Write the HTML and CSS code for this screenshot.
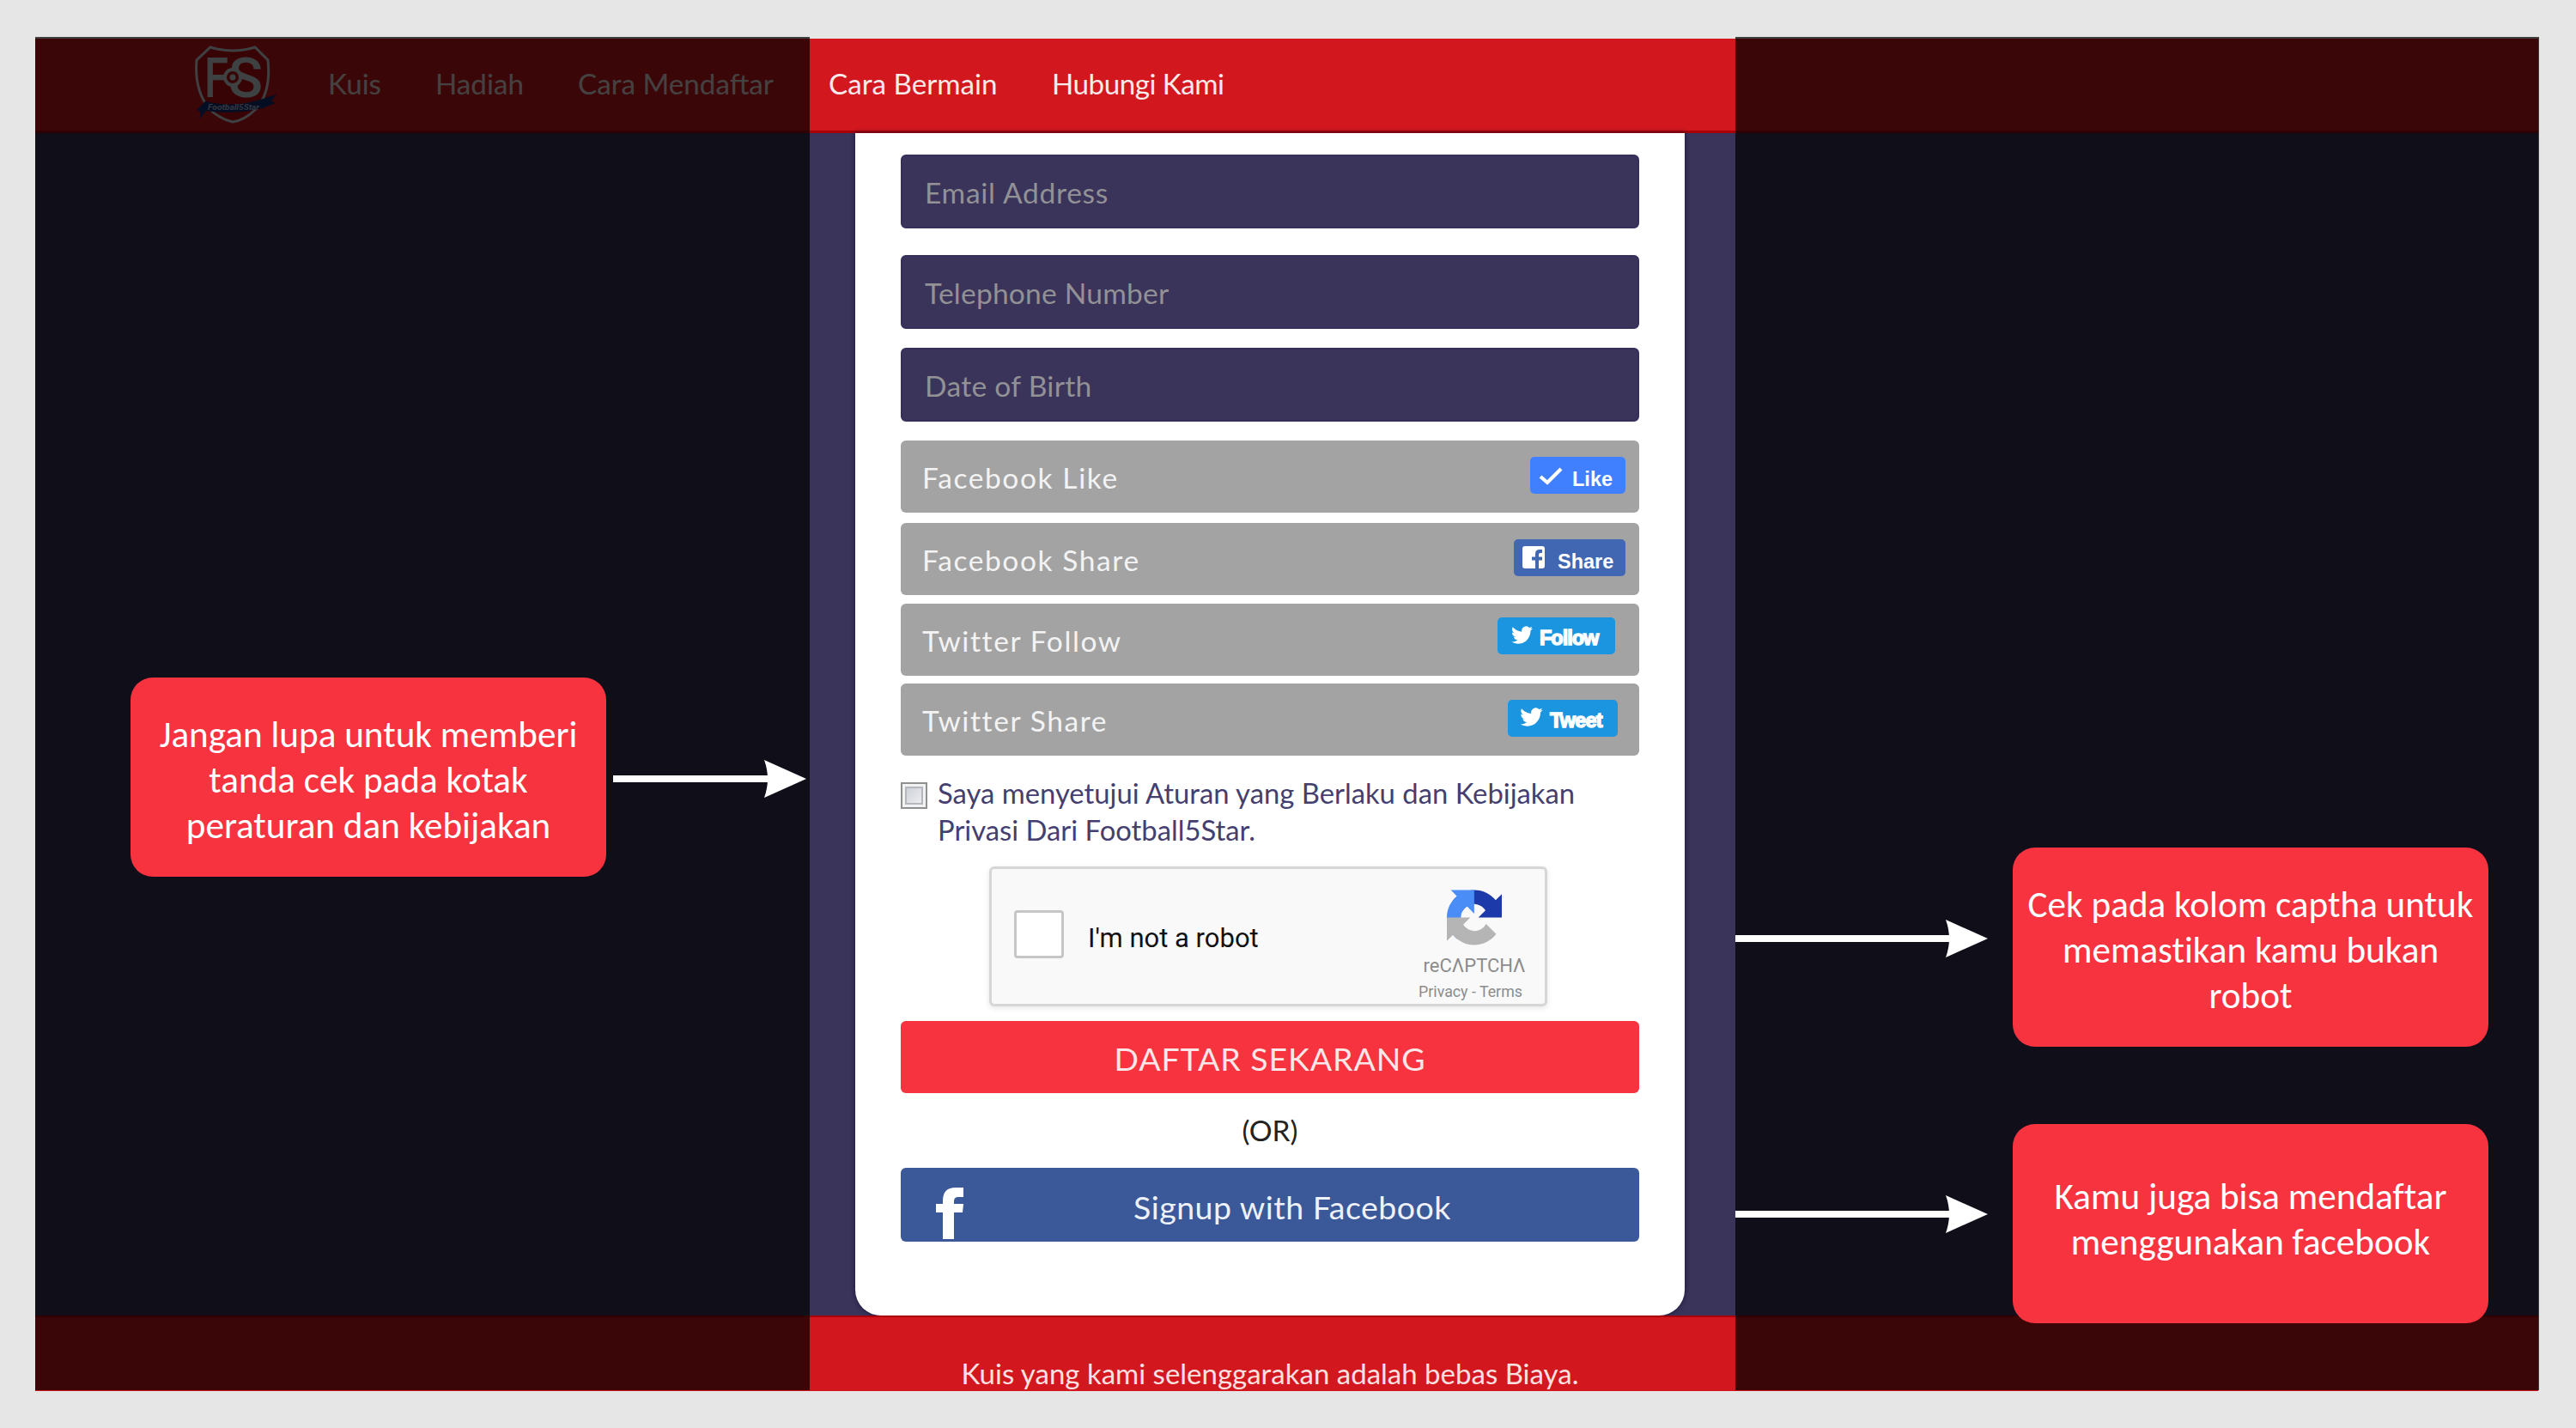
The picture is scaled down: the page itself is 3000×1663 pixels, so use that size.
FILE: index.html
```html
<!DOCTYPE html>
<html lang="id">
<head>
<meta charset="utf-8">
<title>Football5Star - Cara Mendaftar</title>
<link rel="stylesheet" href="styles.css">
</head>
<body>
<svg class="defs" width="0" height="0" aria-hidden="true">
  <symbol id="bird" viewBox="0 2 24 20"><path d="M23.95 4.57a10 10 0 0 1-2.82.77 4.96 4.96 0 0 0 2.16-2.72c-.95.56-2 .96-3.13 1.19a4.92 4.92 0 0 0-8.39 4.48C7.69 8.1 4.07 6.13 1.64 3.16a4.92 4.92 0 0 0 1.52 6.57 4.9 4.9 0 0 1-2.23-.61v.06a4.92 4.92 0 0 0 3.95 4.83 5 5 0 0 1-2.21.08 4.94 4.94 0 0 0 4.6 3.42A9.87 9.87 0 0 1 0 19.54a13.99 13.99 0 0 0 7.55 2.21c9.05 0 14-7.5 14-13.98 0-.21 0-.42-.02-.63a9.94 9.94 0 0 0 2.46-2.55z"/></symbol>
  <symbol id="arrowhead" viewBox="0 0 49 44"><path d="M0 0L49 22L0 44Q8 22 0 0Z"/></symbol>
</svg>

<div class="page">
  <header class="topbar">
    <svg class="logo" viewBox="0 0 96 96">
      <path class="crest" d="M20 5Q46 13 72 5L87 20Q91 57 73 77Q60 90 46 92Q30 88 19 77Q1 55 4 20Z"/>
      <text class="mono" x="13" y="63" textLength="28" lengthAdjust="spacingAndGlyphs">F</text>
      <text class="mono" x="41" y="63" textLength="40" lengthAdjust="spacingAndGlyphs">S</text>
      <circle class="ball" cx="46" cy="40" r="9"/>
      <circle class="ball-dot" cx="46" cy="40" r="3.500"/>
      <path class="ribbon" d="M4 78L14 68Q46 76 78 66L97 60L91 68L96 70L81 76Q46 84 15 79L8 88L8 80Z"/>
      <text class="banner" x="17" y="78" textLength="60" lengthAdjust="spacingAndGlyphs">Football5Star</text>
    </svg>
    <nav class="nav">
      <a>Kuis</a><a>Hadiah</a><a>Cara Mendaftar</a><a>Cara Bermain</a><a class="nav-contact">Hubungi Kami</a>
    </nav>
  </header>

  <main class="content">
    <form class="card">
      <div class="field email">Email Address</div>
      <div class="field phone">Telephone Number</div>
      <div class="field birth">Date of Birth</div>

      <div class="task task-like"><span>Facebook Like</span>
        <b class="btn like"><svg viewBox="0 0 28 21"><path d="M2 11l8 7L26 2" fill="none" stroke="#fff" stroke-width="4.2"/></svg><i>Like</i></b></div>
      <div class="task task-share"><span>Facebook Share</span>
        <b class="btn share"><svg viewBox="0 0 26 26"><path fill-rule="evenodd" d="M3 0H23Q26 0 26 3V23Q26 26 23 26H19V16.500H23V12.500H19V10Q19 8 21 8H23V4H20Q15 4 15 9V12.500H11V16.500H15V26H3Q0 26 0 23V3Q0 0 3 0Z"/></svg><i>Share</i></b></div>
      <div class="task task-follow"><span>Twitter Follow</span>
        <b class="btn follow"><svg><use href="#bird"/></svg><i>Follow</i></b></div>
      <div class="task task-tweet"><span>Twitter Share</span>
        <b class="btn tweet"><svg><use href="#bird"/></svg><i>Tweet</i></b></div>

      <div class="terms"><span class="tick"></span>
        <p>Saya menyetujui Aturan yang Berlaku dan Kebijakan<br><span>Privasi Dari Football5Star.</span></p></div>

      <div class="captcha">
        <span class="captcha-box"></span>
        <span class="captcha-label">I'm not a robot</span>
        <div class="captcha-brand">
          <svg viewBox="0 0 64 64">
            <path fill="#1c3aa9" d="M64 31.955l-.016-1.37V4.687l-7.16 7.16C50.964 4.674 42.033.093 32.03.093c-10.403 0-19.645 4.958-25.486 12.637l11.736 11.86a15.55 15.55 0 0 1 4.754-5.334c2.05-1.6 4.952-2.906 8.968-2.906.485 0 .86.057 1.135.163 4.976.393 9.288 3.14 11.828 7.124l-8.307 8.307L64 31.953"/>
            <path fill="#4a8df6" d="M31.862.094l-1.37.016H4.594l7.16 7.16C4.58 13.147 0 22.08 0 32.046c0 10.403 4.958 19.645 12.637 25.486L24.497 45.796a15.55 15.55 0 0 1-5.334-4.754c-1.6-2.05-2.906-4.952-2.906-8.968 0-.485.057-.86.163-1.135.393-4.976 3.14-9.288 7.124-11.828l8.307 8.307L31.86.095"/>
            <path fill="#b5b5b5" d="M.001 32.045l.016 1.37v25.898l7.16-7.16c5.868 7.174 14.8 11.754 24.766 11.754 10.403 0 19.645-4.958 25.486-12.637L45.693 39.41a15.55 15.55 0 0 1-4.754 5.334c-2.05 1.6-4.952 2.906-8.968 2.906-.485 0-.86-.057-1.135-.163-4.976-.393-9.288-3.14-11.828-7.124l8.307-8.307-27.314-.012"/>
          </svg>
          <span class="brand-name">reCΛPTCHΛ</span>
          <span class="brand-links">Privacy - Terms</span>
        </div>
      </div>

      <div class="submit">DAFTAR SEKARANG</div>
      <div class="or">(OR)</div>
      <div class="facebook">
        <svg viewBox="0 0 32 60"><path d="M8 60V29H0V19H8V15Q8 0 23 0H32V11H26Q21 11 21 16V19H32L31 29H21V60Z"/></svg>
        <span>Signup with Facebook</span>
      </div>
    </form>
  </main>

  <footer class="footer">Kuis yang kami selenggarakan adalah bebas Biaya.</footer>
</div>

<div class="shade shade-left"></div>
<div class="shade shade-right"></div>

<div class="note note-terms">Jangan lupa untuk memberi<br>tanda cek pada kotak<br>peraturan dan kebijakan</div>
<div class="note note-captcha">Cek pada kolom captha untuk<br>memastikan kamu bukan<br>robot</div>
<div class="note note-facebook">Kamu juga bisa mendaftar<br>menggunakan facebook</div>
<div class="arrow arrow-terms"><span></span><svg><use href="#arrowhead"/></svg></div>
<div class="arrow arrow-captcha"><span></span><svg><use href="#arrowhead"/></svg></div>
<div class="arrow arrow-facebook"><span></span><svg><use href="#arrowhead"/></svg></div>
</body>
</html>
```
FILE: styles.css
```css
* { box-sizing: border-box; }
body {
  margin: 0;
  width: 3000px;
  height: 1663px;
  padding: 45px 0 0 41px;
  overflow: hidden;
  position: relative;
  background: #e6e6e6;
  font-family: Lato, sans-serif;
  white-space: nowrap;
}
.defs { position: absolute; }
.page {
  width: 2915px;
  height: 1575px;
  display: flex;
  flex-direction: column;
  overflow: hidden;
  background: #3a345a;
}

/* top bar */
.topbar {
  height: 110px;
  display: flex;
  flex: none;
  background: #d2171e;
  border-bottom: 3px solid #a90008;
}
.logo { width: 96px; height: 96px; margin: 5px 0 0 184px; overflow: visible; }
.crest { fill: #c40d14; stroke: #dfe5ea; stroke-width: 3; }
.mono { font: 500 64px Roboto, sans-serif; fill: #dfe8ea; }
.ball { fill: #c40d14; stroke: #dfe8ea; stroke-width: 4; }
.ball-dot { fill: #dfe8ea; }
.ribbon { fill: #10307c; }
.banner { font: italic 700 9px Roboto, sans-serif; fill: #b9c4e0; }
.nav {
  display: grid;
  grid-template-columns: 125px 166px 292px 260px auto;
  margin-left: 61px;
  font-size: 33.2px;
  line-height: 105px;
  color: #f8e9ea;
}
.nav-contact { letter-spacing: -.5px; }

/* form card */
.content { height: 1377px; flex: none; display: flex; }
.card {
  width: 966px;
  margin-left: 955px;
  padding: 25px 53px 0;
  background: #fff;
  border-radius: 0 0 30px 30px;
  box-shadow: 0 0 5px 1px rgba(20, 14, 50, .6);
}
.field, .task, .submit, .facebook { border-radius: 6px; }
.field {
  height: 86px;
  padding-left: 26px;
  border: 2px solid #35305b;
  background: #3a345a;
  color: #929195;
  font-size: 33.6px;
  line-height: 85px;
}
.email { margin-bottom: 31px; letter-spacing: .7px; }
.phone { margin-bottom: 22px; letter-spacing: .2px; }
.birth { margin-bottom: 22px; letter-spacing: .3px; }

.task {
  height: 84px;
  display: flex;
  justify-content: space-between;
  padding-left: 25px;
  background: #a3a3a3;
  color: #f3f3f3;
  font-size: 33.5px;
  line-height: 86px;
  letter-spacing: 1.6px;
}
.task-like { margin-bottom: 12px; }
.task-share { margin-bottom: 10px; }
.task-follow { margin-bottom: 9px; }
.btn {
  height: 43px;
  display: flex;
  border-radius: 5px;
  color: #fff;
  font: 700 23.500px/27px "Liberation Sans", Arial, sans-serif;
  letter-spacing: 0;
}
.btn i { font-style: normal; }
.btn svg { fill: #fff; flex: none; }
.like { width: 111px; margin: 19px 16px 0 0; background: #4080ff; }
.like svg { width: 28px; height: 21px; margin: 12px 11px 0 10px; }
.like i { margin-top: 13px; }
.share { width: 130px; margin: 19px 16px 0 0; background: #4267b2; }
.share svg { width: 26px; height: 26px; margin: 8px 15px 0 10px; }
.share i { margin-top: 13px; }
.follow { width: 137px; margin: 16px 28px 0 0; background: #1b95e0; }
.follow svg { width: 25px; height: 21px; margin: 10px 8px 0 16px; }
.follow i { margin-top: 11px; letter-spacing: -1px; -webkit-text-stroke: 1.4px #fff; }
.tweet { width: 128px; margin: 19px 25px 0 0; background: #1b95e0; }
.tweet svg { width: 27px; height: 22px; margin: 9px 8px 0 14px; }
.tweet i { margin-top: 11px; letter-spacing: -.8px; -webkit-text-stroke: 1.4px #fff; }

.terms { display: flex; margin-top: 21px; color: #453f70; font-size: 32.8px; line-height: 43px; }
.terms p { margin: 1px 0 -1px 12px; }
.tick {
  width: 31px;
  height: 31px;
  margin-top: 10px;
  border: 2px solid #8e8f8f;
  background: linear-gradient(135deg, #c6cad2, #f4f4f6);
  box-shadow: inset 0 0 0 3px #f2f2f2, inset 0 0 0 5px #b4b8be;
}

.captcha {
  width: 650px;
  height: 163px;
  margin: 22px 0 0 103px;
  display: flex;
  border: 3px solid #d6d6d6;
  border-radius: 6px;
  background: #f9f9f9;
  box-shadow: 0 2px 6px rgba(0, 0, 0, .1);
}
.captcha-box {
  width: 58px;
  height: 56px;
  margin: 48px 28px 0 26px;
  border: 3px solid #c6c6c6;
  border-radius: 4px;
  background: #fff;
}
.captcha-label {
  width: 385px;
  padding-top: 61px;
  font: 450 31px/40px Roboto, sans-serif;
  color: #111;
}
.captcha-brand { display: flex; flex-direction: column; align-items: center; width: 130px; padding-top: 24px; }
.captcha-brand svg { width: 64px; height: 65px; }
.brand-name { margin-top: 11px; font: 22px/26px Roboto, sans-serif; color: #8c8c8c; }
.brand-links { margin: 5px 9px 0 0; font: 17.8px/24px Roboto, sans-serif; color: #8c8c8c; }

.submit {
  height: 84px;
  margin-top: 17px;
  background: #f7333f;
  color: #fce6e8;
  font-size: 37.5px;
  line-height: 87px;
  letter-spacing: .9px;
  text-align: center;
}
.or { height: 87px; font-size: 33.500px; line-height: 86px; text-align: center; color: #222; }
.facebook {
  height: 86px;
  display: flex;
  background: #3b5998;
  color: #eef1f7;
  font-size: 37.5px;
  line-height: 91px;
  letter-spacing: .5px;
}
.facebook svg { width: 32px; height: 60px; margin: 23px 198px 0 41px; fill: #fff; }

.footer {
  height: 88px;
  flex: none;
  border-top: 2px solid #ab0008;
  background: #d2171e;
  color: #fbe0e1;
  font-size: 33px;
  line-height: 131px;
  text-align: center;
  padding-right: 39px;
}

/* dimmed areas */
.shade { position: absolute; top: 43px; height: 1576px; background: rgba(0, 0, 0, .72); }
.shade-left { left: 41px; width: 902px; }
.shade-right { left: 2021px; width: 936px; }

/* callouts */
.note {
  position: absolute;
  width: 554px;
  height: 232px;
  padding-top: 40px;
  border-radius: 26px;
  background: #f7333f;
  color: #fff;
  font-family: Carlito, Lato, sans-serif;
  font-size: 43.2px;
  font-variant-ligatures: none;
  line-height: 53px;
  text-align: center;
}
.note-terms { left: 152px; top: 789px; }
.note-captcha { left: 2344px; top: 987px; }
.note-facebook { left: 2344px; top: 1309px; padding-top: 58px; }
.arrow { position: absolute; height: 44px; display: flex; align-items: center; }
.arrow span { flex: 1; height: 8px; margin-right: -6px; background: #fff; }
.arrow svg { width: 49px; height: 44px; fill: #fff; }
.arrow-terms { left: 714px; top: 885px; width: 225px; }
.arrow-captcha { left: 2021px; top: 1071px; width: 294px; }
.arrow-facebook { left: 2021px; top: 1392px; width: 294px; }
```
